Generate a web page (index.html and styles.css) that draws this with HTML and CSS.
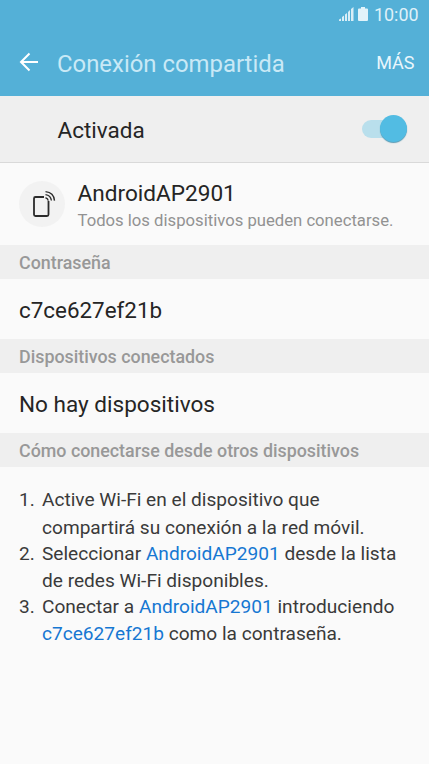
FILE: index.html
```html
<!DOCTYPE html>
<html lang="es">
<head>
<meta charset="utf-8">
<title>Conexión compartida</title>
<link rel="stylesheet" href="styles.css">
</head>
<body>
<header class="top">
  <div class="status">
    <svg class="signal" width="15" height="15" viewBox="0 0 15 15" fill="#d9eef7"><path d="M0 14v-1.500l2-1V14zM3 14v-4l2-1.500V14zM6 14V7.500L8 6v8zM9 14V5l2-2v11zM12 14V2l2.500-2v14z"/></svg>
    <svg class="battery" width="10" height="15" viewBox="0 0 10 15" fill="#e2f3fa"><path d="M3 0h4v1.500h2q1 0 1 1V13q0 1-1 1H1q-1 0-1-1V2.500q0-1 1-1h2z"/></svg>
    <span class="clock">10:00</span>
  </div>
  <div class="bar">
    <svg class="back" width="20" height="20" viewBox="0 0 20 20" fill="none" stroke="#fff" stroke-width="2"><path d="M19 10H2M10.500 1.500 2 10l8.500 8.500"/></svg>
    <h1 class="title">Conexión compartida</h1>
    <span class="more">MÁS</span>
  </div>
</header>
<main>
  <section class="enabled">
    <span class="enabled-label">Activada</span>
    <span class="switch"><span class="knob"></span></span>
  </section>
  <section class="network">
    <span class="badge"><svg width="46" height="46" viewBox="0 0 46 46" fill="none" stroke="#2b2b2b" stroke-width="1.800"><path d="M25 16h-8.500q-1.500 0-1.500 1.500v16q0 1.500 1.500 1.500H28q1.500 0 1.500-1.500V20"/><path stroke-width="1.400" d="M26.500 16.800q2.300.5 2.800 2.800M26.500 13.600q5.200.6 5.900 5.900M26.500 10.600q8.300.7 9 9"/></svg></span>
    <div class="network-text">
      <div class="name">AndroidAP2901</div>
      <div class="desc">Todos los dispositivos pueden conectarse.</div>
    </div>
  </section>
  <h2 class="head">Contraseña</h2>
  <div class="value pass">c7ce627ef21b</div>
  <h2 class="head">Dispositivos conectados</h2>
  <div class="value">No hay dispositivos</div>
  <h2 class="head">Cómo conectarse desde otros dispositivos</h2>
  <ol class="steps">
    <li><span>1.</span><p>Active Wi-Fi en el dispositivo que<br>compartirá su conexión a la red móvil.</p></li>
    <li><span>2.</span><p>Seleccionar <b>AndroidAP2901</b> desde la lista<br>de redes Wi-Fi disponibles.</p></li>
    <li><span>3.</span><p>Conectar a <b>AndroidAP2901</b> introduciendo<br><b>c7ce627ef21b</b> como la contraseña.</p></li>
  </ol>
</main>
</body>
</html>
```

FILE: styles.css
```css
* { box-sizing: border-box; }
body { margin: 0; width: 429px; height: 764px; overflow: hidden; background: #fafafa; color: #252525; font-family: Roboto, sans-serif; }
h1, h2, p, ol { margin: 0; padding: 0; font-weight: 400; }
.top { height: 96px; background: #54b0d7; color: #e9f6fc; }
.status { height: 29px; display: flex; align-items: center; justify-content: flex-end; padding-right: 10.500px; }
.battery { margin: 0 5.500px 0 4px; }
.clock { font-size: 17.900px; color: #dff1f9; }
.bar { height: 67px; display: flex; align-items: center; padding: 0 14.500px 0 19px; }
.back { flex: none; margin-bottom: 2px; }
.title { margin-left: 18px; padding-top: 2px; font-size: 23.900px; flex: 1; white-space: nowrap; color: #c9e9f6; }
.more { font-size: 18px; }
.enabled { height: 67px; background: #efefef; border-bottom: 1px solid #d9d9d9; display: flex; align-items: center; justify-content: space-between; padding: 0 22px 0 57.500px; }
.enabled-label { font-size: 22.500px; padding-top: 2px; }
.switch { width: 45px; height: 18px; border-radius: 9px; background: #b9dfec; display: flex; align-items: center; justify-content: flex-end; margin-bottom: 1px; }
.knob { width: 27px; height: 27px; border-radius: 50%; background: #52bce3; flex: none; box-shadow: 0 1px 1px #5a9ab4; }
.network { height: 82px; display: flex; align-items: center; padding-left: 19px; gap: 12.500px; }
.badge { width: 46px; height: 46px; border-radius: 50%; background: #f2f2f2; margin-bottom: 1px; }
.network-text { padding-top: 3px; white-space: nowrap; }
.name { font-size: 22.600px; line-height: 29px; }
.desc { font-size: 16.680px; line-height: 25px; color: #929292; }
.head { height: 34px; background: #efefef; color: #989898; font-size: 17.850px; font-weight: 500; line-height: 36px; padding-left: 19px; }
.value { height: 60px; line-height: 63px; padding-left: 19px; font-size: 22.550px; }
.pass { font-size: 22.400px; }
.steps { list-style: none; padding: 19.400px 0 0 19px; font-size: 19.100px; line-height: 27.200px; color: #3a3a3a; }
.steps li { display: flex; margin-bottom: -1.100px; }
.steps li > span { width: 23px; }
.steps p { white-space: nowrap; }
.steps b { font-weight: 400; color: #1677d2; }
```
